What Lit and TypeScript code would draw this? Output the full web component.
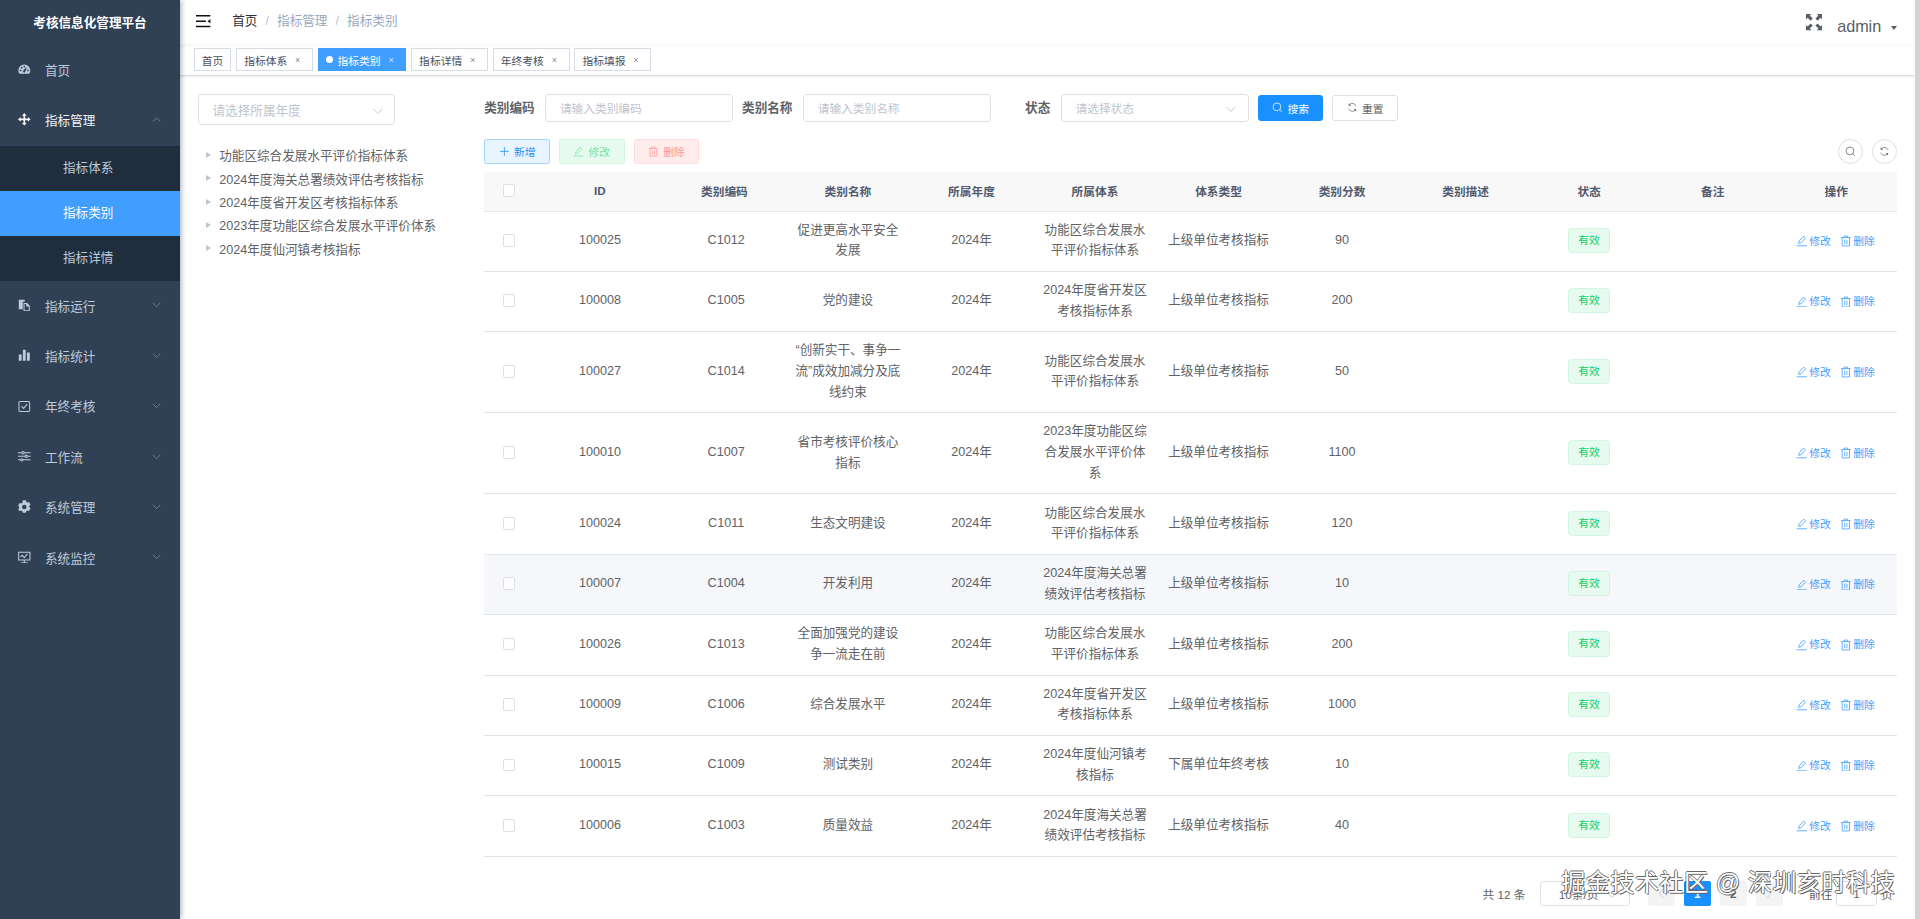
import { LitElement, html, css, svg, unsafeCSS } from "lit";
import { customElement } from "lit/decorators.js";

const FF = unsafeCSS(`"Liberation Sans","Noto Sans CJK SC",sans-serif`);

const icons: Record<string, unknown> = {
  gauge: svg`<path fill="currentColor" fill-rule="evenodd" d="M8 2a7.6 7.6 0 0 0-7.6 7.6c0 1.7.5 3 1.4 4.2h12.4c.9-1.200 1.400-2.500 1.400-4.200A7.600 7.600 0 0 0 8 2zM3.300 10.500a1.100 1.100 0 1 1 0-2.200 1.100 1.100 0 0 1 0 2.200zm1.500-3.500a1.100 1.100 0 1 1 0-2.200 1.100 1.100 0 0 1 0 2.200zM8 5.600a1.100 1.100 0 1 1 0-2.200 1.100 1.100 0 0 1 0 2.200zm.9 6a1.500 1.500 0 0 1-2.400-1.600l4-4.500.6.400-2.200 5.700zm3.800-1.100a1.100 1.100 0 1 1 0-2.200 1.100 1.100 0 0 1 0 2.200z"/>`,
  move: svg`<path fill="currentColor" d="M8 0l3 3.400H9.100v3.500h3.500V5l3.400 3-3.400 3V9.100H9.100v3.500H11L8 16l-3-3.400h1.900V9.100H3.400V11L0 8l3.400-3v1.900h3.500V3.400H5z"/>`,
  copy: svg`<path fill="currentColor" d="M1 1h7.500v2.500H6V13H1z"/><path fill="currentColor" fill-rule="evenodd" d="M7 5h4.500L15 8.500V15.500H7zM8.300 6.300v8h5.400V9.500h-3.300V6.300z"/>`,
  bars: svg`<path fill="currentColor" d="M1 7h3.600v8H1zM6.200 1h3.600v14H6.200zM11.400 4.500H15V15h-3.600z"/>`,
  check: svg`<rect x="1.200" y="2" width="13.600" height="12.600" rx="1.500" fill="none" stroke="currentColor" stroke-width="1.300"/><path d="M4.500 8l2.600 2.700 4.600-5.500" fill="none" stroke="currentColor" stroke-width="1.300"/>`,
  sliders: svg`<g fill="none" stroke="currentColor" stroke-width="1.300"><path d="M0 3.500h5M8 3.500h8M0 8h9M12 8h4M0 12.500h3.500M6.500 12.500H16"/><circle cx="6.500" cy="3.500" r="1.500"/><circle cx="10.500" cy="8" r="1.500"/><circle cx="5" cy="12.500" r="1.500"/></g>`,
  gear: svg`<path fill="currentColor" fill-rule="evenodd" d="M5.800.5h4.400l.6 2.100 1.900 1.100 2.200-.6 2.100 3.800-1.600 1.600v2.100l1.600 1.600-2.100 3.800-2.200-.6-1.900 1.100-.6 2.100H5.800l-.6-2.100-1.900-1.100-2.200.6L-1 13.600l1.600-1.600V9.900L-1 8.300 1.100 4.500l2.200.6 1.900-1.100zM8 7a3.300 3.300 0 1 0 0 6.600A3.300 3.300 0 0 0 8 7z" transform="translate(1 -.1) scale(.875)"/>`,
  monitor: svg`<g fill="none" stroke="currentColor" stroke-width="1.300"><path d="M.8 1.500h14.400v10H.8zM8 11.500v3.500M4 15h8"/><path d="M3 7.500l2.500-2 2.500 3 4-5"/></g>`,
  search: svg`<circle cx="7.300" cy="7.300" r="5.800" fill="none" stroke="currentColor" stroke-width="1.100"/><path d="M11.500 11.500l3 3" stroke="currentColor" stroke-width="1.100"/>`,
  refresh: svg`<g fill="none" stroke="currentColor" stroke-width="1"><path d="M13.500 6A6 6 0 0 0 3.500 4"/><path d="M2.500 10A6 6 0 0 0 12.500 12"/></g><path fill="currentColor" d="M2.500 2v3.500H6zM13.500 14v-3.500H10z"/>`,
  plus: svg`<path d="M8 1.500v13M1.500 8h13" stroke="currentColor" stroke-width="1.100"/>`,
  edit: svg`<path fill="none" stroke="currentColor" stroke-width="1.100" d="M3.500 11.500L4.500 8l6-6.500 2.500 2.500-6 6.500zM1 14.800h14"/>`,
  trash: svg`<path fill="none" stroke="currentColor" stroke-width="1.100" d="M1.500 3.500h13M5.500 3.500v-2h5v2M3 3.500v11.500h10V3.500M6.500 6.500v6M9.500 6.500v6"/>`,
};

const icon = (name: string, cls = "") =>
  html`<svg class="ic ${cls}" viewBox="0 0 16 16">${icons[name]}</svg>`;

const chevron = (up = false) =>
  html`<svg class="chev" viewBox="0 0 12 7"><path d="${up ? "M1 6l5-5 5 5" : "M1 1l5 5 5-5"}" fill="none" stroke="currentColor" stroke-width="1"/></svg>`;

@customElement("side-bar")
class SideBar extends LitElement {
  static styles = css`
    :host { display: block; width: 200px; flex: none; background: #304156; color: #bfcbd9; font-size: 14px; box-shadow: 2px 0 6px rgba(0,21,41,.35); position: relative; z-index: 2; }
    .logo { height: 50px; box-sizing: border-box; padding-bottom: 3px; display: flex; align-items: center; justify-content: center; color: #fff; font-weight: 700; font-size: 14px; }
    .item { height: 56px; box-sizing: border-box; padding: 0 0 2px 20px; display: flex; align-items: center; position: relative; }
    .item.open { color: #f4f4f5; }
    .ic { display: block; width: 14px; height: 14px; margin-right: 16px; flex: none; }
    .chev { display: block; position: absolute; right: 21px; top: 50%; margin-top: -4px; width: 10px; height: 6px; color: #7f8c9c; }
    .sub { height: 50px; box-sizing: border-box; padding: 0 0 3px 70px; display: flex; align-items: center; background: #1f2d3d; }
    .sub.on { background: #409eff; color: #fff; }
  `;
  render() {
    const rows: [string, string][] = [
      ["copy", "指标运行"], ["bars", "指标统计"], ["check", "年终考核"],
      ["sliders", "工作流"], ["gear", "系统管理"], ["monitor", "系统监控"],
    ];
    return html`
      <div class="logo">考核信息化管理平台</div>
      <div class="item">${icon("gauge")}首页</div>
      <div class="item open">${icon("move")}指标管理${chevron(true)}</div>
      <div class="sub">指标体系</div>
      <div class="sub on">指标类别</div>
      <div class="sub">指标详情</div>
      ${rows.map(([i, t]) => html`<div class="item">${icon(i)}${t}${chevron()}</div>`)}
    `;
  }
}

@customElement("top-bar")
class TopBar extends LitElement {
  static styles = css`
    :host { display: block; }
    .nav { height: 50px; box-sizing: border-box; display: flex; align-items: center; padding: 0 0 0 18px; box-shadow: 0 1px 4px rgba(0,21,41,.06); position: relative; }
    .burger { width: 16px; height: 16px; margin: 0 24px 4px 0; color: #111; flex: none; }
    .crumb { font-size: 14px; color: #97a8be; display: flex; align-items: center; margin-bottom: 4px; line-height: 20px; }
    .crumb b { font-weight: 400; color: #303133; }
    .crumb i { font-style: normal; margin: 0 9px; color: #c0c4cc; }
    .right { margin-left: auto; display: flex; align-items: center; padding-right: 20px; color: #5a5e66; }
    .full { width: 18px; height: 18px; margin-right: 17px; color: #5a5e66; }
    .user { font-size: 18px; line-height: 22px; margin-top: 9px; }
    .caret { width: 0; height: 0; border: 4px solid transparent; border-top: 5px solid #5a5e66; margin: 16px 0 0 11px; }
    .tags { height: 34px; display: flex; align-items: center; padding-left: 15px; background: #fff; border-bottom: 1px solid #d8dce5; box-shadow: 0 1px 3px rgba(0,0,0,.12), 0 0 3px rgba(0,0,0,.04); box-sizing: border-box; }
    .tag { height: 26px; box-sizing: border-box; border: 1px solid #d8dce5; color: #495060; font-size: 12px; padding: 0 8px; margin-right: 5px; display: flex; align-items: center; background: #fff; }
    .tag.on { background: #409eff; border-color: #409eff; color: #fff; }
    .dot { width: 8px; height: 8px; border-radius: 50%; background: #fff; margin-right: 5px; }
    .x { width: 16px; text-align: center; margin-left: 3.600px; font-size: 10px; opacity: .7; }
  `;
  render() {
    const tabs = ["指标体系", "指标类别", "指标详情", "年终考核", "指标填报"];
    return html`
      <div class="nav">
        <svg class="burger" viewBox="0 0 16 16"><path d="M0 2h16M0 8h11M0 14h16" stroke="currentColor" stroke-width="1.600"/><path d="M16 5.500v5L12.800 8z" fill="currentColor"/></svg>
        <div class="crumb"><b>首页</b><i>/</i><span>指标管理</span><i>/</i><span>指标类别</span></div>
        <div class="right">
          <svg class="full" viewBox="0 0 18 18"><path fill="currentColor" d="M0 0h6L4.200 1.800 7.500 5.100 5.100 7.500 1.800 4.200 0 6zM18 0v6l-1.800-1.800-3.300 3.300-2.400-2.400 3.300-3.300L12 0zM0 18v-6l1.800 1.800 3.300-3.300 2.400 2.400-3.300 3.300L6 18zM18 18h-6l1.800-1.800-3.300-3.300 2.400-2.400 3.300 3.300L18 12z"/></svg>
          <span class="user">admin</span><span class="caret"></span>
        </div>
      </div>
      <div class="tags">
        <div class="tag">首页</div>
        ${tabs.map((t, i) => html`<div class="tag ${i === 1 ? "on" : ""}">${i === 1 ? html`<span class="dot"></span>` : ""}${t}<span class="x">×</span></div>`)}
      </div>
    `;
  }
}

type Row = { id: string; code: string; name: string; sys: string; type: string; score: string };
const ROWS: Row[] = [
  { id: "100025", code: "C1012", name: "促进更高水平安全发展", sys: "功能区综合发展水平评价指标体系", type: "上级单位考核指标", score: "90" },
  { id: "100008", code: "C1005", name: "党的建设", sys: "2024年度省开发区考核指标体系", type: "上级单位考核指标", score: "200" },
  { id: "100027", code: "C1014", name: "\u201C创新实干、事争一流\u201D成效加减分及底线约束", sys: "功能区综合发展水平评价指标体系", type: "上级单位考核指标", score: "50" },
  { id: "100010", code: "C1007", name: "省市考核评价核心指标", sys: "2023年度功能区综合发展水平评价体系", type: "上级单位考核指标", score: "1100" },
  { id: "100024", code: "C1011", name: "生态文明建设", sys: "功能区综合发展水平评价指标体系", type: "上级单位考核指标", score: "120" },
  { id: "100007", code: "C1004", name: "开发利用", sys: "2024年度海关总署绩效评估考核指标", type: "上级单位考核指标", score: "10" },
  { id: "100026", code: "C1013", name: "全面加强党的建设争一流走在前", sys: "功能区综合发展水平评价指标体系", type: "上级单位考核指标", score: "200" },
  { id: "100009", code: "C1006", name: "综合发展水平", sys: "2024年度省开发区考核指标体系", type: "上级单位考核指标", score: "1000" },
  { id: "100015", code: "C1009", name: "测试类别", sys: "2024年度仙河镇考核指标", type: "下属单位年终考核", score: "10" },
  { id: "100006", code: "C1003", name: "质量效益", sys: "2024年度海关总署绩效评估考核指标", type: "上级单位考核指标", score: "40" },
];

@customElement("data-table")
class DataTable extends LitElement {
  static styles = css`
    :host { display: block; }
    table { width: 100%; border-collapse: collapse; table-layout: fixed; font-size: 14px; color: #606266; }
    .c0 { width: 60px; }
    th { background: #f8f8f9; color: #515a6e; font-size: 13px; font-weight: 700; box-sizing: border-box; height: 43px; padding: 0 0 2px 2px; border-bottom: 1px solid #dfe6ec; text-align: center; }
    td { padding: 9px 9px 11px 11px; line-height: 23px; border-bottom: 1px solid #dfe6ec; text-align: center; word-break: break-all; }
    th.c0, td.c0 { padding: 0 5px 2px 0; }
    th.idc, td.idc { padding-left: 10px; padding-right: 10px; }
    td.code { padding-left: 13px; padding-right: 7px; }
    tr.hover td { background: #f5f7fa; }
    .cb { display: block; width: 14px; height: 14px; box-sizing: border-box; border: 1px solid #dcdfe6; border-radius: 2px; background: #fff; margin: 0 auto; }
    .tag { display: inline-block; height: 28px; line-height: 26px; box-sizing: border-box; padding: 0 10px; font-size: 12px; color: #13ce66; background: #e7faf0; border: 1px solid #d0f5e0; border-radius: 4px; vertical-align: middle; }
    td.ops { white-space: nowrap; font-size: 12px; color: #409eff; padding: 2px 0 0 0; }
    .op { display: inline-flex; align-items: center; }
    .op + .op { margin-left: 10px; }
    .ic { width: 13px; height: 13px; margin-right: 2px; }
  `;
  render() {
    const heads = ["ID", "类别编码", "类别名称", "所属年度", "所属体系", "体系类型", "类别分数", "类别描述", "状态", "备注", "操作"];
    return html`
      <table>
        <colgroup><col class="c0" />${heads.map(() => html`<col />`)}</colgroup>
        <thead><tr><th class="c0"><span class="cb"></span></th>${heads.map((h, i) => html`<th class="${i === 0 ? "idc" : ""}">${h}</th>`)}</tr></thead>
        <tbody>
          ${ROWS.map((r) => html`
            <tr class="${r.id === "100007" ? "hover" : ""}">
              <td class="c0"><span class="cb"></span></td>
              <td class="idc">${r.id}</td><td class="code">${r.code}</td><td>${r.name}</td><td>2024年</td>
              <td>${r.sys}</td><td>${r.type}</td><td>${r.score}</td><td></td>
              <td><span class="tag">有效</span></td><td></td>
              <td class="ops"><span class="op">${icon("edit")}修改</span><span class="op">${icon("trash")}删除</span></td>
            </tr>`)}
        </tbody>
      </table>
    `;
  }
}

@customElement("app-root")
export class AppRoot extends LitElement {
  static styles = css`
    :host { display: block; zoom: 0.9; width: 2133.4px; height: 1021px; overflow: hidden; position: relative; font-family: ${FF}; background: #fff; }
    .shell { display: flex; height: 100%; }
    .main { flex: 1; min-width: 0; display: flex; flex-direction: column; padding-right: 5.5px; }
    .content { display: flex; padding: 20px; flex: 1; }
    .left { width: 298px; margin-right: 20px; flex: none; }
    .right { flex: 1; min-width: 0; }
    .sel, .inp { box-sizing: border-box; border: 1px solid #dcdfe6; border-radius: 4px; color: #c0c4cc; background: #fff; display: flex; align-items: center; position: relative; padding: 0 15px; font-size: 13px; }
    .treesel { width: 219px; height: 35px; font-size: 14px; padding: 0 15px; }
    .sel .chev { display: block; position: absolute; right: 12px; top: 50%; margin-top: -2px; width: 13px; height: 7px; color: #c0c4cc; }
    .tree { margin-top: 20px; font-size: 14px; color: #606266; }
    .node { height: 26px; display: flex; align-items: center; }
    .tri { width: 0; height: 0; border: 4px solid transparent; border-left: 6px solid #c0c4cc; border-right: 0; margin: 0 9px 0 9px; }
    .form { display: flex; align-items: center; height: 32px; }
    .lbl { width: 68px; flex: none; box-sizing: border-box; padding: 0 12px 3px 0; text-align: right; font-size: 14px; font-weight: 700; color: #606266; white-space: nowrap; }
    .fld { width: 208.500px; height: 32px; margin-right: 10px; flex: none; }
    .btn { box-sizing: border-box; width: 73px; height: 28px; padding-bottom: 1px; border: 1px solid #dcdfe6; border-radius: 3px; font-size: 12px; background: #fff; color: #606266; display: flex; align-items: center; justify-content: center; flex: none; }
    .btn .ic { display: block; width: 12px; height: 12px; margin-right: 5px; }
    .btn.pri { background: #1890ff; border-color: #1890ff; color: #fff; margin-right: 10px; }
    .btn.add { background: #e8f4ff; border-color: #a3d3ff; color: #1890ff; }
    .btn.ed { background: #e7faf0; border-color: #d0f5e0; color: #71e2a3; }
    .btn.del { background: #ffeded; border-color: #ffdbdb; color: #ff9292; }
    .tools { display: flex; gap: 10px; align-items: center; margin-top: 18.500px; height: 28px; }
    .sp { flex: 1; }
    .circ { width: 28px; height: 28px; box-sizing: border-box; border: 1px solid #dcdfe6; border-radius: 50%; display: flex; align-items: center; justify-content: center; color: #606266; }
    .circ .ic { display: block; width: 12px; height: 12px; }
    .tbl { margin-top: 9px; }
    .pager { display: flex; align-items: center; justify-content: flex-end; margin-top: 27px; height: 28px; font-size: 13px; color: #606266; padding-right: 5px; }
    .psel { width: 100px; height: 28px; margin: 0 10px 0 16px; padding: 0 0 0 20px; color: #606266; font-size: 13px; }
    .pg { width: 30px; height: 28px; border-radius: 2px; background: #f4f4f5; margin-left: 10px; display: flex; align-items: center; justify-content: center; font-weight: 700; color: #606266; }
    .pg.on { background: #1890ff; color: #fff; }
    .pg .chev { display: block; width: 7px; height: 12px; color: #c0c4cc; }
    .goto { margin-left: 29px; }
    .pinp { width: 46px; height: 28px; padding: 0; justify-content: center; color: #606266; margin: 0 4px; }
    .mark { position: absolute; right: 27.500px; bottom: 26px; font-size: 26.700px; line-height: 30px; color: #fff; letter-spacing: 0.6px; white-space: nowrap; text-shadow: -1px 0 #666, 0 -1px #666, 1px 1px #666; z-index: 3; }
    .thumb { position: absolute; right: 0; top: 0; bottom: 0; width: 5.500px; background: #d3d3d3; z-index: 4; }
  `;
  render() {
    return html`
      <div class="shell">
        <side-bar></side-bar>
        <div class="main">
          <top-bar></top-bar>
          <div class="content">
            <div class="left">
              <div class="sel treesel">请选择所属年度${chevron()}</div>
              <div class="tree">
                ${["功能区综合发展水平评价指标体系", "2024年度海关总署绩效评估考核指标", "2024年度省开发区考核指标体系", "2023年度功能区综合发展水平评价体系", "2024年度仙河镇考核指标"].map(
                  (t) => html`<div class="node"><span class="tri"></span>${t}</div>`
                )}
              </div>
            </div>
            <div class="right">
              <div class="form">
                <div class="lbl">类别编码</div><div class="inp fld">请输入类别编码</div>
                <div class="lbl">类别名称</div><div class="inp fld">请输入类别名称</div>
                <div class="lbl">状态</div><div class="sel fld">请选择状态${chevron()}</div>
                <div class="btn pri">${icon("search")}搜索</div>
                <div class="btn">${icon("refresh")}重置</div>
              </div>
              <div class="tools">
                <div class="btn add">${icon("plus")}新增</div>
                <div class="btn ed">${icon("edit")}修改</div>
                <div class="btn del">${icon("trash")}删除</div>
                <div class="sp"></div>
                <div class="circ">${icon("search")}</div>
                <div class="circ">${icon("refresh")}</div>
              </div>
              <data-table class="tbl"></data-table>
              <div class="pager">
                <span>共 12 条</span>
                <div class="sel psel">10条/页${chevron()}</div>
                <div class="pg"><svg class="chev" viewBox="0 0 7 12"><path d="M6 1L1 6l5 5" fill="none" stroke="currentColor"/></svg></div>
                <div class="pg on">1</div>
                <div class="pg">2</div>
                <div class="pg"><svg class="chev" viewBox="0 0 7 12"><path d="M1 1l5 5-5 5" fill="none" stroke="currentColor"/></svg></div>
                <span class="goto">前往</span>
                <div class="inp pinp">1</div>
                <span>页</span>
              </div>
            </div>
          </div>
        </div>
      </div>
      <div class="mark">掘金技术社区 @ 深圳亥时科技</div>
      <div class="thumb"></div>
    `;
  }
}
